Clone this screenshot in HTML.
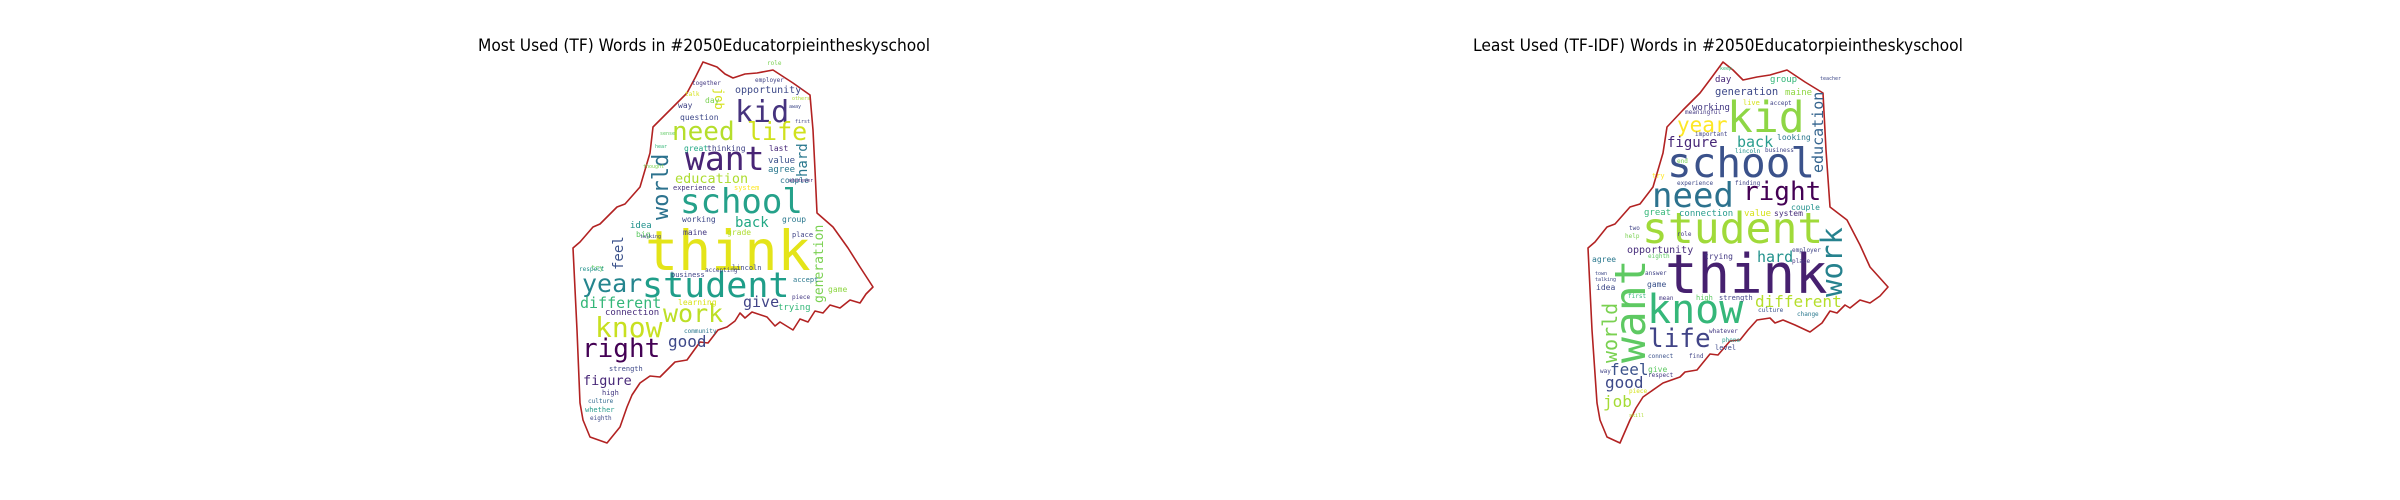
<!DOCTYPE html>
<html><head><meta charset="utf-8"><style>
html,body{margin:0;padding:0;background:#fff;}
svg{display:block;}
.t{font-family:"DejaVu Sans","Liberation Sans",sans-serif;font-size:16.5px;fill:#000;}
.w{font-family:"DejaVu Sans Mono","Liberation Mono",monospace;}
</style></head><body>
<svg width="2400" height="500" viewBox="0 0 2400 500" xmlns="http://www.w3.org/2000/svg">
<rect width="2400" height="500" fill="#fff"/>
<text class="t" x="478" y="51" textLength="452" lengthAdjust="spacingAndGlyphs">Most Used (TF) Words in #2050Educatorpieintheskyschool</text>
<text class="t" x="1473" y="51" textLength="490" lengthAdjust="spacingAndGlyphs">Least Used (TF-IDF) Words in #2050Educatorpieintheskyschool</text>

<polygon fill="none" stroke="#b22222" stroke-width="1.6" stroke-linejoin="round" points="703,62 717,67 725,74 733,78 745,74 757,73 773,70 793,83 810,95 813,130 815,170 817,213 833,227 848,248 860,267 873,287 866,294 860,303 850,300 840,308 830,305 823,313 815,311 808,322 800,319 793,330 780,322 775,326 767,317 752,312 745,318 740,313 735,321 727,327 718,330 708,343 700,342 687,360 675,362 660,377 650,376 640,383 632,395 627,407 620,427 607,443 590,437 583,420 580,403 577,330 573,248 580,242 593,227 600,224 617,207 625,204 640,187 650,153 653,127 670,110 687,93 695,78"/>
<polygon fill="none" stroke="#b22222" stroke-width="1.6" stroke-linejoin="round" points="1723,62 1733,70 1743,80 1757,77 1770,75 1787,70 1805,82 1823,93 1826,150 1830,207 1847,220 1860,245 1870,267 1888,287 1880,296 1870,303 1860,300 1850,308 1845,305 1837,313 1830,311 1822,323 1810,332 1795,325 1783,320 1775,323 1770,318 1757,320 1748,330 1740,340 1730,341 1718,355 1710,354 1697,370 1685,372 1680,377 1663,383 1643,397 1636,408 1630,420 1620,443 1607,437 1600,420 1597,403 1592,330 1588,248 1595,242 1607,227 1615,224 1630,207 1640,204 1653,187 1663,153 1667,127 1683,110 1700,93 1712,77"/>

<g class="w">
<!-- LEFT -->
<text x="645" y="270" font-size="55" fill="#e4e419">think</text>
<text x="642" y="297" font-size="35" fill="#1f9e89">student</text>
<text x="680" y="213" font-size="34" fill="#25a18a">school</text>
<text x="685" y="170" font-size="33" fill="#482475">want</text>
<text x="735" y="122" font-size="30" fill="#46337e">kid</text>
<text x="672" y="140" font-size="26" fill="#b5de2b">need</text>
<text x="747" y="140" font-size="25" fill="#d0e11c">life</text>
<text x="582" y="292" font-size="25" fill="#25858e">year</text>
<text x="595" y="337" font-size="28" fill="#c8e020">know</text>
<text x="582" y="357" font-size="26" fill="#440154">right</text>
<text x="663" y="322" font-size="25" fill="#bddf26">work</text>
<text x="580" y="308" font-size="15" fill="#35b779">different</text>
<text x="675" y="183" font-size="13.5" fill="#addc30">education</text>
<text x="735" y="227" font-size="14" fill="#22a884">back</text>
<text x="668" y="347" font-size="16" fill="#3e4989">good</text>
<text x="743" y="307" font-size="15" fill="#414487">give</text>
<text x="583" y="385" font-size="13.5" fill="#482878">figure</text>
<text x="735" y="93" font-size="10" fill="#3e4a89">opportunity</text>
<text transform="translate(668,220) rotate(-90)" font-size="22" fill="#2c728e">world</text>
<text transform="translate(623,270) rotate(-90)" font-size="14" fill="#3b528b">feel</text>
<text transform="translate(823,303) rotate(-90)" font-size="13" fill="#7ad151">generation</text>
<text transform="translate(807,177) rotate(-90)" font-size="14" fill="#2a788e">hard</text>
<text transform="translate(715,88) rotate(90)" font-size="12" fill="#d5e21a">job</text>
<text x="680" y="120" font-size="8" fill="#3e4989">question</text>
<text x="678" y="108" font-size="8" fill="#414487">way</text>
<text x="705" y="103" font-size="8" fill="#7ad151">day</text>
<text x="684" y="151" font-size="8" fill="#22a884">great</text>
<text x="707" y="151" font-size="8" fill="#414487">thinking</text>
<text x="769" y="151" font-size="8" fill="#482878">last</text>
<text x="768" y="163" font-size="9" fill="#3b528b">value</text>
<text x="768" y="172" font-size="9" fill="#2a788e">agree</text>
<text x="780" y="183" font-size="8" fill="#2c728e">couple</text>
<text x="673" y="190" font-size="7" fill="#46337e">experience</text>
<text x="734" y="190" font-size="7" fill="#fde725">system</text>
<text x="682" y="222" font-size="8" fill="#3e4989">working</text>
<text x="782" y="222" font-size="8" fill="#2a788e">group</text>
<text x="630" y="228" font-size="9" fill="#21918c">idea</text>
<text x="683" y="235" font-size="8" fill="#443983">maine</text>
<text x="727" y="235" font-size="8" fill="#addc30">grade</text>
<text x="792" y="237" font-size="7" fill="#414487">place</text>
<text x="636" y="237" font-size="8" fill="#5ec962">big</text>
<text x="671" y="277" font-size="7" fill="#414487">business</text>
<text x="678" y="305" font-size="8" fill="#d8e219">learning</text>
<text x="605" y="315" font-size="9" fill="#472d7b">connection</text>
<text x="778" y="310" font-size="9" fill="#35b779">trying</text>
<text x="684" y="333" font-size="6" fill="#2a788e">community</text>
<text x="609" y="371" font-size="7" fill="#3e4989">strength</text>
<text x="602" y="395" font-size="7" fill="#443983">high</text>
<text x="588" y="403" font-size="6" fill="#31688e">culture</text>
<text x="585" y="412" font-size="7" fill="#2a9d8e">whether</text>
<text x="590" y="420" font-size="6" fill="#3e4989">eighth</text>
<text x="591" y="270" font-size="7" fill="#5ec962">try</text>
<text x="579" y="271" font-size="6" fill="#21918c">respect</text>
<text x="732" y="270" font-size="7" fill="#3e4989">lincoln</text>
<text x="705" y="272" font-size="6" fill="#414487">accepting</text>
<text x="793" y="282" font-size="7" fill="#2a788e">accept</text>
<text x="828" y="292" font-size="8" fill="#8fd744">game</text>
<text x="792" y="299" font-size="6" fill="#443983">piece</text>
<text x="767" y="65" font-size="6" fill="#7ad151">role</text>
<text x="755" y="82" font-size="6" fill="#414487">employer</text>
<text x="692" y="85" font-size="6" fill="#443983">together</text>
<text x="685" y="96" font-size="6" fill="#d5e21a">talk</text>
<text x="792" y="100" font-size="5" fill="#addc30">others</text>
<text x="789" y="108" font-size="5" fill="#3e4989">away</text>
<text x="795" y="123" font-size="5" fill="#414487">first</text>
<text x="789" y="182" font-size="5" fill="#482878">whatever</text>
<text x="660" y="135" font-size="5" fill="#5ec962">sense</text>
<text x="655" y="148" font-size="5" fill="#35b779">hear</text>
<text x="643" y="168" font-size="5" fill="#7ad151">thought</text>
<text x="640" y="238" font-size="5" fill="#414487">talking</text>
</g>

<g class="w">
<!-- RIGHT -->
<text x="1665" y="293" font-size="54" fill="#46206f">think</text>
<text x="1642" y="243" font-size="43" fill="#a0da39">student</text>
<text x="1667" y="177" font-size="41" fill="#3b528b">school</text>
<text x="1652" y="207" font-size="34" fill="#2c728e">need</text>
<text x="1743" y="200" font-size="26" fill="#440154">right</text>
<text x="1727" y="132" font-size="43" fill="#8ed645">kid</text>
<text x="1677" y="132" font-size="21" fill="#fde725">year</text>
<text x="1647" y="323" font-size="40" fill="#35b779">know</text>
<text x="1648" y="347" font-size="26" fill="#414487">life</text>
<text x="1755" y="307" font-size="16" fill="#b5de2b">different</text>
<text x="1737" y="147" font-size="15" fill="#2a9d8e">back</text>
<text x="1667" y="147" font-size="14" fill="#482878">figure</text>
<text x="1757" y="262" font-size="15" fill="#21918c">hard</text>
<text x="1610" y="375" font-size="16" fill="#3b528b">feel</text>
<text x="1605" y="388" font-size="16" fill="#3e4989">good</text>
<text x="1603" y="407" font-size="16" fill="#a5db36">job</text>
<text x="1715" y="95" font-size="10.5" fill="#3e4989">generation</text>
<text x="1627" y="253" font-size="10" fill="#472d7b">opportunity</text>
<text transform="translate(1645,363) rotate(-90)" font-size="43" fill="#5ec962">want</text>
<text transform="translate(1842,297) rotate(-90)" font-size="29" fill="#26828e">work</text>
<text transform="translate(1823,173) rotate(-90)" font-size="15" fill="#33638d">education</text>
<text transform="translate(1617,363) rotate(-90)" font-size="20" fill="#7ad151">world</text>
<text x="1715" y="82" font-size="9" fill="#482878">day</text>
<text x="1770" y="82" font-size="9" fill="#35b779">group</text>
<text x="1785" y="95" font-size="9" fill="#8fd744">maine</text>
<text x="1692" y="110" font-size="9" fill="#443983">working</text>
<text x="1743" y="105" font-size="7" fill="#d5e21a">live</text>
<text x="1770" y="105" font-size="6" fill="#414487">accept</text>
<text x="1685" y="114" font-size="6" fill="#443983">meaningful</text>
<text x="1695" y="136" font-size="6" fill="#414487">important</text>
<text x="1777" y="140" font-size="8" fill="#2a788e">looking</text>
<text x="1735" y="153" font-size="6" fill="#21918c">lincoln</text>
<text x="1765" y="152" font-size="6" fill="#414487">business</text>
<text x="1677" y="163" font-size="6" fill="#7ad151">end</text>
<text x="1652" y="178" font-size="7" fill="#fde725">try</text>
<text x="1677" y="185" font-size="6" fill="#3e4989">experience</text>
<text x="1735" y="185" font-size="6" fill="#414487">finding</text>
<text x="1644" y="215" font-size="9" fill="#35b779">great</text>
<text x="1679" y="216" font-size="9" fill="#2a9d8e">connection</text>
<text x="1744" y="216" font-size="9" fill="#d5e21a">value</text>
<text x="1774" y="216" font-size="8" fill="#472d7b">system</text>
<text x="1791" y="210" font-size="8" fill="#21918c">couple</text>
<text x="1592" y="262" font-size="8" fill="#2a788e">agree</text>
<text x="1704" y="259" font-size="8" fill="#443983">trying</text>
<text x="1792" y="252" font-size="6" fill="#414487">employer</text>
<text x="1792" y="263" font-size="6" fill="#443983">place</text>
<text x="1596" y="290" font-size="8" fill="#3e4989">idea</text>
<text x="1647" y="287" font-size="8" fill="#3b528b">game</text>
<text x="1696" y="300" font-size="7" fill="#5ec962">high</text>
<text x="1719" y="300" font-size="7" fill="#414487">strength</text>
<text x="1758" y="312" font-size="6" fill="#3b528b">culture</text>
<text x="1797" y="316" font-size="6" fill="#2a788e">change</text>
<text x="1709" y="333" font-size="6" fill="#443983">whatever</text>
<text x="1722" y="342" font-size="6" fill="#2a9d8e">phone</text>
<text x="1715" y="350" font-size="7" fill="#3e4989">level</text>
<text x="1648" y="358" font-size="6" fill="#3b528b">connect</text>
<text x="1689" y="358" font-size="6" fill="#414487">find</text>
<text x="1648" y="372" font-size="8" fill="#5ec962">give</text>
<text x="1648" y="377" font-size="6" fill="#443983">respect</text>
<text x="1600" y="373" font-size="6" fill="#414487">way</text>
<text x="1629" y="393" font-size="6" fill="#d5e21a">piece</text>
<text x="1629" y="417" font-size="5" fill="#addc30">skill</text>
<text x="1629" y="230" font-size="6" fill="#414487">two</text>
<text x="1625" y="238" font-size="6" fill="#7ad151">help</text>
<text x="1677" y="236" font-size="6" fill="#443983">role</text>
<text x="1648" y="258" font-size="6" fill="#5ec962">eighth</text>
<text x="1645" y="275" font-size="6" fill="#414487">answer</text>
<text x="1595" y="275" font-size="5" fill="#3e4989">town</text>
<text x="1595" y="281" font-size="5" fill="#3e4989">talking</text>
<text x="1628" y="298" font-size="6" fill="#35b779">first</text>
<text x="1659" y="300" font-size="6" fill="#443983">mean</text>
<text x="1820" y="80" font-size="5" fill="#3e4989">teacher</text>
<text x="1720" y="70" font-size="5" fill="#35b779">keep</text>
</g>
</svg>
</body></html>
